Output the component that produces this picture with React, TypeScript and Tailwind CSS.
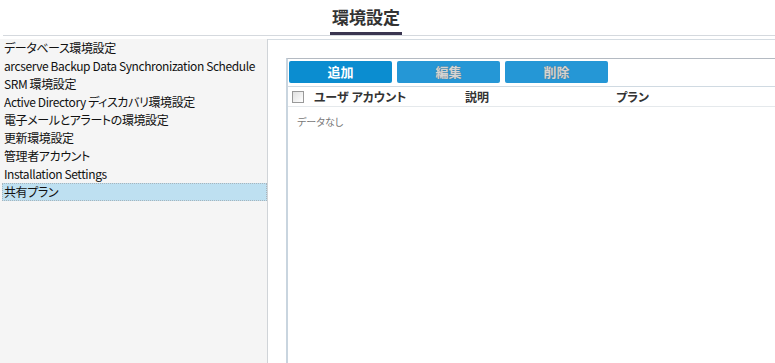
import React from "react";

const items = [
  "データベース環境設定",
  "arcserve Backup Data Synchronization Schedule",
  "SRM 環境設定",
  "Active Directory ディスカバリ環境設定",
  "電子メールとアラートの環境設定",
  "更新環境設定",
  "管理者アカウント",
  "Installation Settings",
  "共有プラン",
];

export default function App() {
  return (
    <div
      className="w-[775px] h-[363px] bg-white overflow-hidden flex flex-col text-[#111] [font-feature-settings:'palt']"
      style={{ fontFamily: '"Noto Sans CJK JP", "Noto Sans", sans-serif' }}
    >
      <div className="h-[36px] ml-[3px] border-b border-[#d5d9de] flex shrink-0">
        <div className="ml-[327px] w-[72px] h-[35px] border-b-[3px] border-[#3a3550] flex items-center justify-center">
          <span className="text-[17px] font-bold text-[#333] leading-none [font-feature-settings:normal]">環境設定</span>
        </div>
      </div>
      <div className="h-[3px] shrink-0" />
      <div className="flex flex-1 min-h-0">
        <div className="w-[268px] bg-[#f5f5f5] border-r border-[#d0d4d8] flex flex-col shrink-0">
          {items.map((t, i) => (
            <div
              key={t}
              className={
                "h-[18px] flex items-center text-[12px] leading-none whitespace-nowrap tracking-[-0.4px] " +
                (i === items.length - 1
                  ? "bg-[#bee0f1] border border-dotted border-[#a8b4bc] ml-[2px] pl-[1px]"
                  : "pl-[4px]")
              }
            >
              {t}
            </div>
          ))}
        </div>
        <div className="flex-1 border-t border-[#d5dce2] pt-[18px] pl-[18px] flex flex-col">
          <div className="flex-1 border-l-2 border-t border-l-[#c9d5df] border-t-[#b4bac2] flex flex-col">
            <div className="flex gap-[5px] pl-[1px] pt-[2px] pb-[3px] border-b border-[#d0dae2]">
              <button className="w-[103px] h-[22px] rounded-[2px] bg-[#0b8dd0] text-white text-[13px] font-bold flex items-center justify-center">
                追加
              </button>
              <button
                className="w-[103px] h-[22px] rounded-[2px] bg-[#2597d6] text-[#d4d4d4] text-[13px] font-bold flex items-center justify-center"
                style={{ textShadow: "0 0 1px #666" }}
              >
                編集
              </button>
              <button
                className="w-[103px] h-[22px] rounded-[2px] bg-[#2597d6] text-[#d4d4d4] text-[13px] font-bold flex items-center justify-center"
                style={{ textShadow: "0 0 1px #666" }}
              >
                削除
              </button>
            </div>
            <div className="h-[20px] flex items-center border-b border-[#e5e9ec] text-[12px] font-bold text-[#333]">
              <div className="ml-[4px] w-[12px] h-[12px] border border-[#999] bg-gradient-to-br from-[#e0e0e0] to-white" />
              <div className="ml-[10px] w-[151px] whitespace-nowrap">ユーザ アカウント</div>
              <div className="w-[151px]">説明</div>
              <div>プラン</div>
            </div>
            <div className="pl-[9px] pt-[10px] text-[10px] text-[#777] leading-none">データなし</div>
          </div>
        </div>
      </div>
    </div>
  );
}
